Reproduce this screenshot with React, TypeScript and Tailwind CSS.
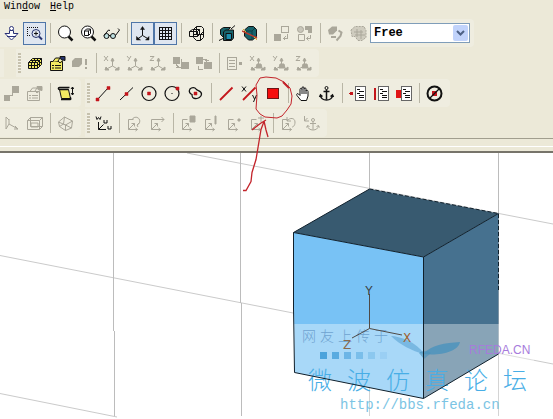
import { type ReactNode } from 'react';

const INK = '#111111';
const GREY = '#aaa79a';
const RED = '#c4161c';

type IconProps = { children: ReactNode; crisp?: boolean };

const Icon = ({ children, crisp }: IconProps) => (
    <svg
        viewBox="0 0 17 17"
        className="w-[17px] h-[17px] shrink-0"
        fill="none"
        stroke={INK}
        shapeRendering={crisp ? 'crispEdges' : 'auto'}
        aria-hidden="true"
    >
        {children}
    </svg>
);

const Tool = ({ label, active, disabled, children }: { label: string; active?: boolean; disabled?: boolean; children: ReactNode }) => (
    <button
        type="button"
        aria-label={label}
        aria-pressed={active}
        disabled={disabled}
        className={`w-[23px] h-[23px] shrink-0 flex items-center justify-center ${active ? 'border border-[#4f76a8] bg-[#dfe6f0]' : ''}`}
    >
        {children}
    </button>
);

const Sep = () => (
    <div className="w-2 h-5 shrink-0 flex justify-center">
        <div className="w-px h-full bg-[#b9b6a6]" />
    </div>
);

const Grip = () => (
    <div className="w-[7px] h-5 shrink-0 flex justify-center">
        <div className="w-[3px] h-full bg-[repeating-linear-gradient(to_bottom,#c6c1ad_0_2px,#f4f2e8_2px_3px)]" />
    </div>
);

const Bar = ({ label, children }: { label: string; children: ReactNode }) => (
    <div role="toolbar" aria-label={label} className="h-7 flex items-center bg-[#efede0] rounded-r-sm pr-1">
        {children}
    </div>
);

/* ---------- row 1 ---------- */

const PanDown = () => (
    <Icon>
        <g stroke="#2b3278">
            <circle cx="8.5" cy="3.5" r="2" fill="#ffffff" />
            <path d="M6.5 5.5h4v3h4.500l-6.500 6.500-6.500-6.500h4.500z" fill="#ffffff" />
            <path d="M4 11.5h9" />
        </g>
    </Icon>
);

const ZoomBox = () => (
    <Icon>
        <path d="M1 2.5h11M1.5 2v9M1 10.5h4M11.5 2v2" strokeDasharray="1 1" />
        <circle cx="10" cy="8.5" r="4" stroke="#27346e" />
        <path d="M8 8.5h4M10 6.5v4" />
        <path d="M13 11.5l3 3" stroke="#27346e" strokeWidth="2" />
    </Icon>
);

const Magnifier = () => (
    <Icon>
        <circle cx="7.5" cy="7" r="6" fill="#ffffff" />
        <path d="M11.500 11.500l4 4" strokeWidth="2.5" />
    </Icon>
);

const ZoomFit = () => (
    <Icon>
        <circle cx="7.5" cy="7" r="6" fill="#ffffff" />
        <path d="M4.500 6l2-2h4v4.500l-2 2h-4zM4.500 6h4l2-2M8.500 6v4.500" />
        <path d="M11.500 11.500l4 4" strokeWidth="2.5" />
    </Icon>
);

const Glasses = () => (
    <Icon>
        <circle cx="3.5" cy="11" r="2.500" fill="#bfe0e0" />
        <circle cx="10" cy="11" r="2.500" fill="#bfe0e0" />
        <path d="M6 10.500h1.500M1 10.500L5.500 5l1.500.5M12.500 10.500l4-5.500-1.500-1.500" />
    </Icon>
);

const Axes = () => (
    <Icon>
        <path d="M8.500 2v8.500M8.500 10.500l-5 3.500M8.500 10.500l6 3.500" />
        <path d="M6.500 4.500l2-3 2 3zM2.500 11.500V15h4zM11.500 15H15v-3.500z" fill={INK} strokeWidth=".5" />
    </Icon>
);

const Grid = () => (
    <Icon crisp>
        <path d="M2.500 2.500h12v12h-12zM5.500 2v13M8.500 2v13M11.500 2v13M2 5.500h13M2 8.500h13M2 11.500h13" />
    </Icon>
);

const WireBoxes = () => (
    <Icon>
        <path d="M1.500 6.500l3-2h7v5l-2 2h-8zM5.500 4.500l3-3h5l2 2v9l-3 3h-4l-3-3zM1.500 6.500h8v5M9.500 6.500l2-2M8.500 1.500v8h7M5.500 9.500h7v6M12.500 9.500l3-3" />
    </Icon>
);

const Solid = () => (
    <Icon>
        <path d="M1.500 4.500l3-2h7l-2 2v8h-5l-3-3z" fill="#17636b" />
        <path d="M4.500 7l2-2h8v8l-2 2.500h-8z" fill="#17636b" />
        <path d="M7 8.500h5.500v6H7z" fill="#1c8fae" />
        <path d="M12 4l4-3.500M0 15.500l4-2" />
    </Icon>
);

const SolidCut = () => (
    <Icon>
        <path d="M2.500 5l4-3.500h5l3 3v7l-4 3.500h-4l-4-4z" fill="#17636b" />
        <path d="M4 9v-3h6l3-3M10 6v8" stroke="#0e3d44" />
        <path d="M0 6l15 7" stroke="#c0392b" strokeWidth="1.5" />
        <path d="M1 4l3 3M12 12l3 3" stroke="#d4b43c" />
    </Icon>
);

const SwapSquares = () => (
    <Icon crisp>
        <path d="M8.500 1.500h7v6h-7z" stroke={GREY} />
        <path d="M1 9h7v7H1z" fill={GREY} stroke="none" />
        <path d="M14.500 9v4.500h-4M12.500 11.500l-2 2 2 2" stroke={GREY} />
    </Icon>
);

const SwapShapes = () => (
    <Icon>
        <circle cx="4.500" cy="4.500" r="3" stroke={GREY} fill="#c9c6ba" />
        <path d="M9 1h7v7h-4V5H9z" fill={GREY} stroke="none" />
        <path d="M2.500 9.500h6v6h-6zM14.500 10v3.500h-4M12.500 11.500l-2 2 2 2" stroke={GREY} />
    </Icon>
);

const Rotate = () => (
    <Icon>
        <path d="M1 5l4-3.500h5v4l-4 4H2z" fill={GREY} stroke="none" />
        <path d="M11.500 5.500l3 2-1 3.500-4 4.500M4 12h5" stroke={GREY} strokeWidth="2" />
    </Icon>
);

const RotateGroup = () => (
    <Icon>
        <path d="M1 5l4-3.500h9l2 4v7l-4 3H8l-3-4H2z" fill="#cfccbf" stroke={GREY} strokeDasharray="2 1" />
        <path d="M4 7h9M7 4v8M5 10h10M11 5v9" stroke={GREY} />
    </Icon>
);

/* ---------- row 2 ---------- */

const YellowBoxes = () => (
    <Icon>
        <path d="M2.500 7.500l4-4h9v6l-4 4h-9z" fill="#f2ea62" />
        <path d="M2.500 7.500h9v6M11.500 7.500l4-4M5.500 7.500v6M8.500 7.500v6M2.500 10.500h9l4-4M4.500 5.500h9v6M9.500 3.500l-4 4M12.500 3.500l-4 4" />
    </Icon>
);

const HandForm = ({ color = INK, fill = '#f2ea62' }: { color?: string; fill?: string }) => (
    <Icon>
        <g stroke={color}>
            <path d="M1.500 6.500h12v9h-12z" fill={fill} />
            <path d="M3 10.500h2M6 10.500h6M3 13h2M6 13h6" />
            <path d="M3.500 7l3-4h4.500l-2 3 2 2 3-2.500" fill={fill} />
            <path d="M11 1.500h5v4l-4-1z" fill={color === INK ? '#27346e' : color} />
        </g>
    </Icon>
);

const BoxAlert = () => (
    <Icon>
        <path d="M0 6l3-3h7v6l-3 3H0z" fill={GREY} stroke="none" />
        <path d="M14 4v6M14 12v2" stroke={GREY} strokeWidth="2" />
    </Icon>
);

const AXIS_LETTERS = {
    x: 'M1 1l4 5M5 1L1 6',
    y: 'M1 1l2 2.500M5 1L2 6',
    z: 'M1 1.500h4L1 5.500h4',
};

const AxisTool = ({ axis, solid }: { axis: 'x' | 'y' | 'z'; solid?: boolean }) => (
    <Icon>
        <g stroke={GREY}>
            <path d={AXIS_LETTERS[axis]} />
            <path d="M9.500 4v7l-6 3M9.500 11l5 3" />
            <path d="M8 6l1.500-3L11 6zM2 15h4l-3-3zM12 15h4v-3z" fill={GREY} />
            {solid && <path d="M7 13l1-4h4l1 4z" fill={GREY} />}
        </g>
    </Icon>
);

const GreyGroup = ({ outlined }: { outlined?: boolean }) => (
    <Icon crisp>
        <path d="M1 2h7v7H1zM9 7h8v7H9z" fill={GREY} stroke="none" />
        <path d={outlined ? 'M3.500 11v3h4M9.500 5.500h4M5.500 4.500h6v6' : 'M4 12h5M9.500 4v4M4 9l3 4'} stroke={GREY} />
    </Icon>
);

const GreyList = () => (
    <Icon crisp>
        <path d="M1.500 2.500h9v12h-9zM3 5.500h6M3 8.500h6M3 11.500h6" stroke={GREY} />
        <path d="M13 7h3v3h-3z" fill={GREY} stroke="none" />
    </Icon>
);

/* ---------- row 3 ---------- */

const LinkedSquares = () => (
    <Icon crisp>
        <path d="M9 1h7v7H9zM1 10h6v6H1z" fill={GREY} stroke="none" />
        <path d="M7 10.500h2.500V8" stroke={GREY} />
    </Icon>
);

const Sheet = () => (
    <Icon>
        <path d="M2.500 4.500h9l2 9h-9z" fill="#f2ea62" />
        <path d="M12.500 2.500h-10c-1.500 0-1.500 2 0 2h9M4 14.500h9c1 0 1-1.500 0-2" strokeWidth="1.500" />
        <path d="M15.500 2v8M14 4l1.500-2L17 4M14 8l1.500 2L17 8" />
    </Icon>
);

const dot = (x: number, y: number) => <path d={`M${x - 1.5} ${y - 1.5}h3v3h-3z`} fill={RED} stroke={RED} strokeWidth=".5" />;

const Segment = () => <Icon><path d="M2.500 14.500l11-12" />{dot(2.5, 14.5)}{dot(13.5, 3)}</Icon>;
const MidPoint = () => <Icon><path d="M2 15L15 2.500" />{dot(8.5, 9)}</Icon>;
const CircleCenter = () => <Icon><circle cx="8" cy="8.500" r="7" strokeWidth="1.200" />{dot(8, 8.5)}</Icon>;
const CircleEdge = () => (
    <Icon>
        <circle cx="8" cy="8.500" r="7" strokeWidth="1.200" />
        <path d="M7.500 8.500h1" />
        {dot(13.5, 3.5)}
    </Icon>
);
const Blob = () => (
    <Icon>
        <path d="M3 4c2-2 5-1.500 6 0 1 2 5.500 1.500 5.500 5 0 3-3.500 5-6.500 4.500-3-.5-3-2-3-4C3.500 9 1 7 3 4z" strokeWidth="1.300" />
        {dot(8.5, 8.5)}
    </Icon>
);

const RedLine = () => <Icon><path d="M2 15L14.500 2.500" stroke={RED} strokeWidth="1.800" /></Icon>;

const RedLineXY = () => (
    <Icon>
        <path d="M1 1.500l4 5M5 1.500l-4 5M11.500 10l2 4M15.500 10l-3 7" />
        <path d="M2 15L14.500 2.500" stroke={RED} strokeWidth="1.800" />
    </Icon>
);

const RedFace = () => (
    <Icon crisp>
        <path d="M3.500 3.500h11v10h-11z" fill="#f60d0d" stroke="#6e1616" />
    </Icon>
);

const Hand = () => (
    <Icon>
        <path
            d="M6 15.500L2 10.500c-1-1.500.5-2.500 1.500-1.500L5 10.500V4.500c0-1.500 1.500-1.500 2 0V3c0-1.700 2-1.700 2 0v1c.3-1.500 2-1.500 2 0v2c.5-1.200 2-1 2 .5V11l-1.500 4.500zM7 4.500V9M9 4v5M11 5.500V9"
            fill="#ffffff"
        />
    </Icon>
);

const Anchor = () => (
    <Icon>
        <circle cx="8.500" cy="3" r="1.500" />
        <path d="M8.500 4.500v10M5.500 6.500h6" strokeWidth="1.500" />
        <path d="M2.500 10.500c.5 3 3 4.500 6 4.500s5.500-1.500 6-4.500M1.500 12l1-2 2 1.500M12.500 11.500l2-1.500 1 2" strokeWidth="1.500" />
    </Icon>
);

const ListDoc = ({ mark }: { mark: 'dot' | 'line' | 'face' }) => (
    <Icon crisp>
        <path d="M6.500 1.500h10v14h-10z" fill="#ffffff" stroke="#666666" />
        <path d="M8 4.500h3M10 6.500h5M8 8.500h3M10 10.500h5M10 12.500h5" />
        {mark === 'dot' && <circle cx="2.500" cy="8.500" r="2" fill={RED} stroke="none" />}
        {mark === 'line' && <path d="M2 3h2v12H2z" fill={RED} stroke="none" />}
        {mark === 'face' && <path d="M1 5h5v8H1z" fill="#e01515" stroke="none" />}
    </Icon>
);

const NoSelect = () => (
    <Icon>
        <circle cx="8.500" cy="8.500" r="7" strokeWidth="2" />
        <path d="M6 6h5v5H6z" fill={RED} stroke="none" />
        <path d="M4 13l9-9" strokeWidth="1.200" />
    </Icon>
);

/* ---------- row 4 ---------- */

const GreyAngle = () => (
    <Icon>
        <path d="M3 2v12l3-5 9 5M3 2l3 3M6 9V4M12 11l3 3-4 0" stroke={GREY} />
    </Icon>
);

const GreyWire = () => (
    <Icon>
        <path d="M1.500 5.500l3-3h12v9l-3 3h-12zM1.500 5.500h12v9M13.500 5.500l3-3M4.500 2.500v9h12M5 8h7v4H5z" stroke={GREY} />
    </Icon>
);

const GreyTilt = () => (
    <Icon>
        <path d="M1.500 7l6-5 8 4-1 7-6 2.500-6-4zM1.500 7l7 3 7-4M8.500 10v5.500M7.500 2l-1 7 8 4M2.500 11.500l4-2.500" stroke={GREY} />
    </Icon>
);

const WorkCs = () => (
    <Icon>
        <path d="M1 1.500l1 3 1.500-2 1.500 2 1-3M9 5v3h3V5M13 11v3h3v-3M3.500 7v7.500H11M3.500 14.500l5-5" />
    </Icon>
);

const CS_MARKS = {
    circle: 'M6 5a4 4 0 1 1 5 5l2-2M11 10l1 2',
    arrow: 'M7 4.500h8M12.500 2l2.500 2.500L12.500 7',
    face: 'M10 1h5v6h-5z',
    edge: 'M12 1h1v8h-1z',
    vertex: 'M12 4h2v2h-2z',
    cross: 'M9 3h6M12 1v6',
    undo: 'M7 2v4h4M7 6c3-4 8-3 8 1s-2 5-3 5',
};

const GreyCs = ({ mark }: { mark: keyof typeof CS_MARKS }) => (
    <Icon>
        <g stroke={GREY}>
            <path d="M2.500 4.500v10h9M2.500 14.500l6-6M2.500 4.500h5M9.500 13l2 1.500-2 1.500M5.500 8.500h3v3" />
            <path
                d={CS_MARKS[mark]}
                fill={mark === 'face' || mark === 'edge' || mark === 'vertex' ? GREY : 'none'}
            />
        </g>
    </Icon>
);

const GreyAnchorCs = () => (
    <Icon>
        <g stroke={GREY}>
            <path d="M1.500 1v5H6M1.500 6l3-3" />
            <circle cx="10" cy="5" r="1.500" />
            <path d="M10 6.500v8M7 8.500h6M4.500 11c.5 2.500 2.500 4 5.500 4s5-1.500 5.500-4M3.500 12.500l1-2 2 1M13.500 11.500l2-1 1 2" />
        </g>
    </Icon>
);

/* ---------- 3D view ---------- */

const Viewport = () => (
    <svg viewBox="0 153 553 266" className="block w-full" role="img" aria-label="3D model view">
        <g stroke="#bcbcbc" fill="none">
            <path d="M113.500 153V331M114.500 331V416M240.500 153V303M241.500 303V416M369.500 153V416M498.500 153V416" shapeRendering="crispEdges" />
            <path d="M187 153L553 224M0 255.500L553 364M0 393.500L117 417" strokeWidth=".8" />
        </g>

        <path d="M293.500 232.500L369.500 189L498.500 213.500L423.500 257z" fill="#385a70" />
        <path d="M293.500 232.500L423.500 257V398.500L294.500 372.500z" fill="#78c2f5" />
        <path d="M423.500 257L498.500 213.500V354L423.500 398.500z" fill="#46718f" />

        {/* watermark plate */}
        <rect x="290" y="324" width="244" height="92" fill="#ffffff" fillOpacity=".36" />
        <g fill="#6fa3d0" fontSize="14" fontFamily="Noto Sans CJK SC, sans-serif" fontWeight="300">
            {['网', '友', '上', '传', '于'].map((char, i) => (
                <text key={char} x={302 + i * 18} y="341">{char}</text>
            ))}
        </g>
        <g fill="#4ba3dc">
            <rect x="320" y="352" width="7" height="7" />
            <rect x="332" y="352" width="7" height="7" opacity=".85" />
            <rect x="344" y="352" width="7" height="7" opacity=".65" />
            <rect x="356" y="352" width="7" height="7" opacity=".5" />
            <rect x="368" y="352" width="7" height="7" opacity=".3" />
            <rect x="380" y="352" width="7" height="7" opacity=".15" />
        </g>
        <path d="M391 336c8 0 26 6 33 18-12-3-24-9-33-18z" fill="#6aaedb" opacity=".75" />
        <path d="M423 354c8-9 22-11 37-12-2 10-20 14-37 12z" fill="#4a92bd" opacity=".8" />
        <path d="M419 353c4-3 9-2 12 0l-7 6z" fill="#4a92bd" opacity=".6" />
        <text x="469" y="354" fill="#a77bdc" fontSize="12" fontFamily="Liberation Sans, sans-serif">RFEDA.CN</text>
        <g fill="#48aee6" fontSize="24" fontFamily="Noto Sans CJK SC, sans-serif" fontWeight="300">
            {['微', '波', '仿', '真', '论', '坛'].map((char, i) => (
                <text key={char} x={308 + i * 39} y="389">{char}</text>
            ))}
        </g>
        <text x="340" y="409" fill="#7cc4e4" fontSize="14" fontFamily="Liberation Mono, monospace">http://bbs.rfeda.cn</text>

        <g stroke="#10202c" fill="none">
            <path d="M369.500 189L293.500 232.500V308L294.500 372.500L423.500 398.500L498.500 354M293.500 232.500L423.500 257V398.500M423.500 257L498.500 213.500" />
            <path d="M369.500 189L498.500 213.500M498.500 214V290" strokeDasharray="4 2" />
        </g>
        <path d="M369.500 328.500V294M369.500 328.500L402 335M369.500 328.500L352 338" stroke="#4f4a46" fill="none" />
        <g textAnchor="middle" fontSize="12" fontFamily="DejaVu Sans, sans-serif">
            <text x="369" y="295" fill="#3c4246">Y</text>
            <text x="407" y="342" fill="#a0602f">X</text>
            <text x="347" y="349" fill="#8a6a4c">Z</text>
        </g>
    </svg>
);

const Annotation = () => (
    <svg viewBox="240 70 60 130" className="absolute left-60 top-[70px] w-[60px] h-[130px] pointer-events-none" fill="none" stroke="#c3242b" aria-hidden="true">
        <path d="M260 78l6-1 10 1 8 4 6 6 2 8-1 8-4 6-5 6-5 2-12-1-5-3-4-5 1-14-1-10z" />
        <path d="M283 82l6 6" strokeWidth="2" />
        <path d="M243 190.500h3l5-9 1-9 4-13 3-18 2-12 3-8M252 130l5-4 4-3 5-3M264 121l2 9 2 7" strokeWidth="1.300" />
    </svg>
);

export default function App() {
    return (
        <div className="relative min-h-screen overflow-hidden bg-white">
            <header className="bg-[#ece9d8]">
                <nav className="h-[18px] flex items-center gap-2.5 px-1 pb-1 font-['Liberation_Mono',monospace] text-[10px] leading-3 text-black">
                    <button type="button">Win<span className="underline">d</span>ow</button>
                    <button type="button"><span className="underline">H</span>elp</button>
                </nav>

                <div className="h-[30px] flex items-center">
                    <Bar label="View">
                        <Tool label="Pan"><PanDown /></Tool>
                        <Tool label="Zoom window" active><ZoomBox /></Tool>
                        <Sep />
                        <Tool label="Zoom"><Magnifier /></Tool>
                        <Tool label="Fit all"><ZoomFit /></Tool>
                        <Tool label="Visibility"><Glasses /></Tool>
                        <Sep />
                        <Tool label="Axes" active><Axes /></Tool>
                        <Tool label="Grid" active><Grid /></Tool>
                        <Sep />
                        <Tool label="Wireframe"><WireBoxes /></Tool>
                        <Sep />
                        <Tool label="Shaded"><Solid /></Tool>
                        <Tool label="Clip"><SolidCut /></Tool>
                        <Sep />
                        <Tool label="Swap" disabled><SwapSquares /></Tool>
                        <Tool label="Swap shapes" disabled><SwapShapes /></Tool>
                        <Sep />
                        <Tool label="Rotate" disabled><Rotate /></Tool>
                        <Tool label="Rotate group" disabled><RotateGroup /></Tool>
                        <div className="relative w-[100px] h-5">
                            <select
                                aria-label="Movement mode"
                                className="appearance-none block w-full h-full border border-[#7f9db9] bg-white pl-[3px] font-['Liberation_Mono',monospace] text-xs font-bold text-black"
                            >
                                <option>Free</option>
                            </select>
                            <span className="absolute right-0.5 inset-y-0.5 w-[15px] rounded-xs bg-[#c1d3fb] flex items-center justify-center pointer-events-none">
                                <svg viewBox="0 0 9 6" className="w-[9px] h-[6px]" fill="none" stroke="#4d6185" strokeWidth="2" aria-hidden="true">
                                    <path d="M1 1l3.500 3.500L8 1" />
                                </svg>
                            </span>
                        </div>
                    </Bar>
                </div>

                <div className="h-[30px] flex items-center gap-3">
                    <div className="w-1 h-7 bg-[#efede0]" />
                    <Bar label="Model">
                        <Grip />
                        <Tool label="Boxes"><YellowBoxes /></Tool>
                        <Tool label="Properties"><HandForm /></Tool>
                        <Tool label="Validate" disabled><BoxAlert /></Tool>
                        <Sep />
                        <Tool label="Along X" disabled><AxisTool axis="x" /></Tool>
                        <Tool label="Along Y" disabled><AxisTool axis="y" /></Tool>
                        <Tool label="Along Z" disabled><AxisTool axis="z" /></Tool>
                        <Tool label="Group" disabled><GreyGroup /></Tool>
                        <Tool label="Ungroup" disabled><GreyGroup outlined /></Tool>
                        <Sep />
                        <Tool label="List" disabled><GreyList /></Tool>
                        <Tool label="Sweep X" disabled><AxisTool axis="x" solid /></Tool>
                        <Tool label="Sweep Y" disabled><AxisTool axis="y" solid /></Tool>
                        <Tool label="Sweep Z" disabled><AxisTool axis="z" solid /></Tool>
                    </Bar>
                </div>

                <div className="h-[30px] flex items-center gap-1">
                    <Bar label="Edit">
                        <Tool label="Connect" disabled><LinkedSquares /></Tool>
                        <Tool label="Attributes" disabled><HandForm color={GREY} fill="none" /></Tool>
                        <Sep />
                        <Tool label="Thicken sheet"><Sheet /></Tool>
                    </Bar>
                    <Bar label="Draw">
                        <Grip />
                        <Tool label="Line"><Segment /></Tool>
                        <Tool label="Line midpoint"><MidPoint /></Tool>
                        <Tool label="Circle by centre"><CircleCenter /></Tool>
                        <Tool label="Circle by edge"><CircleEdge /></Tool>
                        <Tool label="Closed curve"><Blob /></Tool>
                        <Sep />
                        <Tool label="Select edge"><RedLine /></Tool>
                        <Tool label="Select edge by XY"><RedLineXY /></Tool>
                        <Tool label="Select face"><RedFace /></Tool>
                        <Sep />
                        <Tool label="Move"><Hand /></Tool>
                        <Tool label="Anchor"><Anchor /></Tool>
                        <Sep />
                        <Tool label="Vertex list"><ListDoc mark="dot" /></Tool>
                        <Tool label="Edge list"><ListDoc mark="line" /></Tool>
                        <Tool label="Face list"><ListDoc mark="face" /></Tool>
                        <Sep />
                        <Tool label="Clear selection"><NoSelect /></Tool>
                    </Bar>
                </div>

                <div className="h-[30px] flex items-center gap-1">
                    <Bar label="Plane">
                        <Tool label="Angle" disabled><GreyAngle /></Tool>
                        <Tool label="Wire box" disabled><GreyWire /></Tool>
                        <Sep />
                        <Tool label="Tilted box" disabled><GreyTilt /></Tool>
                    </Bar>
                    <Bar label="Coordinate system">
                        <Grip />
                        <Tool label="Working coordinates"><WorkCs /></Tool>
                        <Sep />
                        <Tool label="Rotate coordinates" disabled><GreyCs mark="circle" /></Tool>
                        <Tool label="Move coordinates" disabled><GreyCs mark="arrow" /></Tool>
                        <Sep />
                        <Tool label="Align to face" disabled><GreyCs mark="face" /></Tool>
                        <Tool label="Align to edge" disabled><GreyCs mark="edge" /></Tool>
                        <Tool label="Align to vertex" disabled><GreyCs mark="vertex" /></Tool>
                        <Tool label="Align to cross" disabled><GreyCs mark="cross" /></Tool>
                        <Sep />
                        <Tool label="Undo coordinates" disabled><GreyCs mark="undo" /></Tool>
                        <Tool label="Fix coordinates" disabled><GreyAnchorCs /></Tool>
                    </Bar>
                </div>

                <div className="h-[9px] border-t border-b border-t-[#a19e8e] border-b-white" />
                <div className="h-[6px] border-b-2 border-b-[#77746a]" />
            </header>
            <main>
                <Viewport />
            </main>
            <Annotation />
        </div>
    );
}
